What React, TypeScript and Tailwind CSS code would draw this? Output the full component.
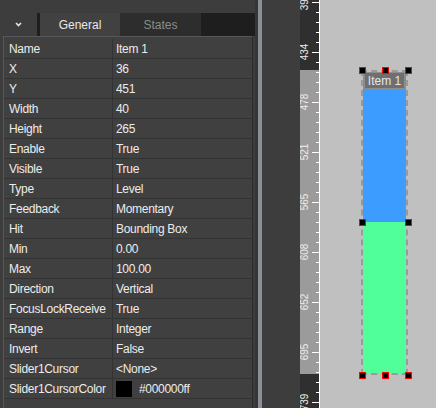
const rows: [string, string][] = [
  ["Name", "Item 1"],
  ["X", "36"],
  ["Y", "451"],
  ["Width", "40"],
  ["Height", "265"],
  ["Enable", "True"],
  ["Visible", "True"],
  ["Type", "Level"],
  ["Feedback", "Momentary"],
  ["Hit", "Bounding Box"],
  ["Min", "0.00"],
  ["Max", "100.00"],
  ["Direction", "Vertical"],
  ["FocusLockReceive", "True"],
  ["Range", "Integer"],
  ["Invert", "False"],
  ["Slider1Cursor", "<None>"],
  ["Slider1CursorColor", "#000000ff"],
];

const labels = ["391", "434", "478", "521", "565", "608", "652", "695", "739"];

// ruler ticks every 10px, major every 50px
const ticks = Array.from({ length: 41 }, (_, i) => 2 + i * 10);

// selection handles, canvas coords
const handles: [number, number][] = [
  [42, 70],
  [65, 70],
  [88, 70],
  [42, 222],
  [88, 222],
  [42, 375],
  [65, 375],
  [88, 375],
];

function PropertyRow({ label, value }: { label: string; value: string }) {
  const isColor = label === "Slider1CursorColor";
  return (
    <div className="flex h-[20px] border-b border-[#333333]">
      <div className="flex w-[109px] items-center border-r border-[#333333] pl-[5px]">
        {label}
      </div>
      <div className="flex flex-1 items-center pl-[3px]">
        {isColor ? (
          <>
            <span className="mr-[7px] h-[16px] w-[16px] bg-black" />
            {value}
          </>
        ) : (
          value
        )}
      </div>
    </div>
  );
}

function Tabs() {
  return (
    <div className="mt-[13px] flex h-[23px] text-[12px]">
      <div className="flex w-[37px] items-center justify-center">
        <svg width="7" height="5" viewBox="0 0 7 5">
          <polyline points="1,1 3.5,3.5 6,1" fill="none" stroke="#e6e6e6" strokeWidth="1.6" />
        </svg>
      </div>
      <div className="w-[3px] bg-[#1e1e1e]" />
      <div className="flex w-[80px] items-center justify-center bg-[#414141] text-[#e8e8e8]">
        General
      </div>
      <div className="flex w-[81px] items-center justify-center bg-[#2d2d2d] text-[#8c8c8c]">
        States
      </div>
      <div className="flex-1 bg-[#1e1e1e]" />
    </div>
  );
}

function Ruler() {
  return (
    <div className="relative h-full w-[20px] overflow-hidden bg-[#2f2f2f]">
      <div className="absolute left-0 top-[70px] h-[304px] w-[19px] bg-[#9b9b9b]" />
      <div className="absolute right-0 top-0 h-full w-[1.5px] bg-white" />
      {ticks.map((y) => (
        <div
          key={y}
          className={`absolute right-0 h-px bg-white ${(y - 2) % 50 === 0 ? "w-[8px]" : "w-[4px]"}`}
          style={{ top: y }}
        />
      ))}
      {labels.map((t, i) => (
        <span
          key={t}
          className="absolute left-[5px] -translate-x-1/2 -translate-y-1/2 -rotate-90 text-[10px] leading-none text-[#ececec]"
          style={{ top: 2 + i * 50 }}
        >
          {t}
        </span>
      ))}
    </div>
  );
}

function Canvas() {
  return (
    <div className="relative h-full flex-1 overflow-hidden bg-[#c0c0c0]">
      <div className="absolute left-[41px] top-[70px] flex h-[305px] w-[47px] flex-col border-2 border-dashed border-[#9a9a9a]">
        <div className="h-[150px] bg-[#3d9cff]" />
        <div className="flex-1 bg-[#50ff9a]" />
      </div>
      <div className="absolute left-[44px] top-[72px] flex h-[17px] w-[41px] items-center justify-center border border-[#8e8e8e] bg-[#6f6f6f] text-[12px] text-[#e6e6e6]">
        Item 1
      </div>
      {handles.map(([x, y]) => (
        <div
          key={`${x}-${y}`}
          className="absolute h-[7px] w-[7px] border border-[#ff0000] bg-black"
          style={{ left: x - 3.5, top: y - 3.5 }}
        />
      ))}
    </div>
  );
}

export default function App() {
  return (
    <div className="flex h-[408px] w-[436px] overflow-hidden bg-[#3d3d3d] font-['Liberation_Sans',Arial,sans-serif]">
      <div className="flex w-[255px] flex-col">
        <Tabs />
        <div className="ml-[3px] mr-[2px] flex-1 border-l border-t border-r border-[#575757] border-r-[#2a2a2a] bg-[#404040] pt-[2px] text-[12px] tracking-[-0.3px] text-[#ececec]">
          {rows.map(([label, value]) => (
            <PropertyRow key={label} label={label} value={value} />
          ))}
        </div>
      </div>
      <div className="w-[3px] bg-[#363636]" />
      <div className="w-[4px] bg-[#8a8f98]" />
      <div className="w-[38px]" />
      <Ruler />
      <Canvas />
    </div>
  );
}
